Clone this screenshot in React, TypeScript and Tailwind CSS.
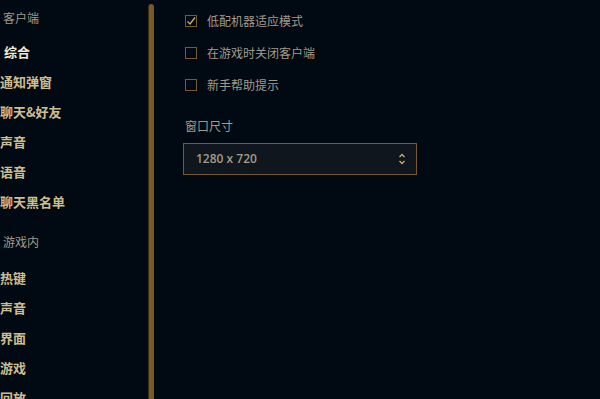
import React from "react";

const font = { fontFamily: '"Noto Sans CJK SC", "Noto Sans", sans-serif' };

function NavItem({ label }: { label: string }) {
  return (
    <div className="h-[30px] shrink-0 flex items-center -ml-[3px] text-[13px] font-bold text-[#cdbe91] leading-none">
      {label}
    </div>
  );
}

function Check({ checked, label }: { checked?: boolean; label: string }) {
  return (
    <div className="h-[32px] shrink-0 flex items-center gap-[10px]">
      <div className="w-[12px] h-[12px] border border-[#785a28] flex items-center justify-center">
        {checked && (
          <svg width="10" height="10" viewBox="0 0 10 10">
            <path d="M1.5 5.5 L4 8 L9 1.5" fill="none" stroke="#c8aa6e" strokeWidth="1.4" />
          </svg>
        )}
      </div>
      <span className="text-[12px] text-[#a09b8c] leading-none">{label}</span>
    </div>
  );
}

export default function App() {
  return (
    <div className="w-[600px] h-[399px] bg-[#010a13] flex overflow-hidden" style={font}>
      <div className="w-[148px] shrink-0 flex flex-col pl-[3px]">
        <div className="h-[36px] shrink-0 flex items-center text-[12px] text-[#a09b8c] leading-none">客户端</div>
        <div className="h-[30px] shrink-0 flex items-center pl-[1px] text-[13px] font-bold text-[#f0e6d2] leading-none">综合</div>
        <NavItem label="通知弹窗" />
        <NavItem label="聊天&好友" />
        <NavItem label="声音" />
        <NavItem label="语音" />
        <NavItem label="聊天黑名单" />
        <div className="h-[46px] shrink-0 flex items-center pt-[6px] text-[12px] text-[#a09b8c] leading-none">
          游戏内
        </div>
        <NavItem label="热键" />
        <NavItem label="声音" />
        <NavItem label="界面" />
        <NavItem label="游戏" />
        <NavItem label="回放" />
      </div>
      <div className="w-[6px] shrink-0 pt-[4px]">
        <div className="w-[6px] h-full rounded-t-[3px] bg-[#785a28] border-l border-[#3c2d14]" />
      </div>
      <div className="flex-1 pl-[31px] pt-[5px] flex flex-col">
        <Check checked label="低配机器适应模式" />
        <Check label="在游戏时关闭客户端" />
        <Check label="新手帮助提示" />
        <div className="mt-[19px] text-[12px] text-[#a09b8c] leading-none">窗口尺寸</div>
        <div className="mt-[11px] -ml-[2px] w-[234px] h-[32px] border border-[#785a28] bg-[#10161d] flex items-center justify-between pl-[12px] pr-[10px]">
          <span className="text-[12px] font-semibold text-[#a09b8c] leading-none" style={{ fontFamily: '"Open Sans", "Noto Sans", sans-serif' }}>1280 x 720</span>
          <svg width="8" height="14" viewBox="0 0 8 14">
            <path d="M1.5 5 L4 2.5 L6.5 5" fill="none" stroke="#c8aa6e" strokeWidth="1.3" />
            <path d="M1.5 9 L4 11.5 L6.5 9" fill="none" stroke="#c8aa6e" strokeWidth="1.3" />
          </svg>
        </div>
      </div>
    </div>
  );
}
